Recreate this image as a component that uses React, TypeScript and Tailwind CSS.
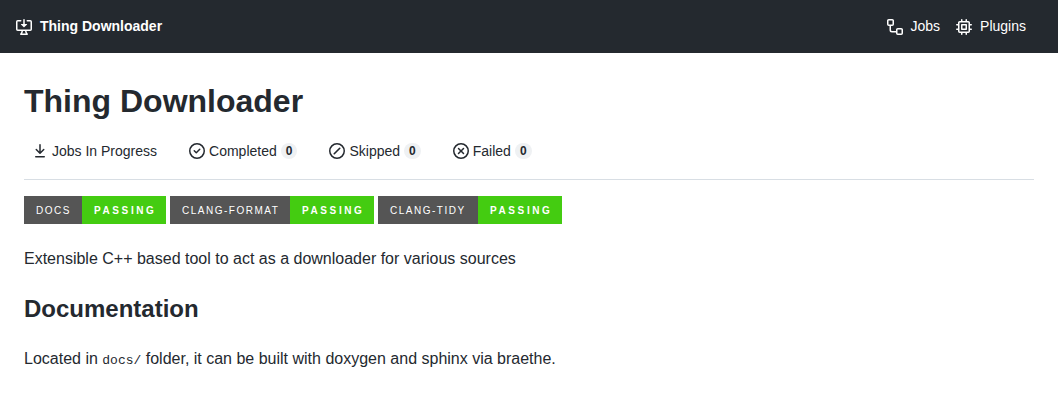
import type { ReactNode } from "react";

const RING = "M0 8a8 8 0 1 1 16 0A8 8 0 0 1 0 8Zm1.5 0a6.5 6.5 0 1 0 13 0 6.5 6.5 0 0 0-13 0Z";

const icons = {
  desktopDownload:
    "m4.927 5.427 2.896 2.896a.25.25 0 0 0 .354 0l2.896-2.896A.25.25 0 0 0 10.896 5H8.75V.75a.75.75 0 1 0-1.5 0V5H5.104a.25.25 0 0 0-.177.427ZM1.573 2.573a.25.25 0 0 0-.073.177v7.5a.25.25 0 0 0 .25.25h12.5a.25.25 0 0 0 .25-.25v-7.5a.25.25 0 0 0-.25-.25h-3a.75.75 0 1 1 0-1.5h3A1.75 1.75 0 0 1 16 2.75v7.5A1.75 1.75 0 0 1 14.25 12h-3.727c.099 1.041.52 1.872 1.292 2.757A.752.752 0 0 1 11.25 16h-6.5a.75.75 0 0 1-.565-1.243c.772-.885 1.192-1.716 1.292-2.757H1.75A1.75 1.75 0 0 1 0 10.25v-7.5A1.75 1.75 0 0 1 1.75 1h3a.75.75 0 0 1 0 1.5h-3a.25.25 0 0 0-.177.073ZM6.982 12a5.72 5.72 0 0 1-.765 2.5h3.566a5.72 5.72 0 0 1-.765-2.5H6.982Z",
  workflow:
    "M0 1.75C0 .784.784 0 1.75 0h3.5C6.216 0 7 .784 7 1.75v3.5A1.75 1.75 0 0 1 5.25 7H4v4a1 1 0 0 0 1 1h4v-1.25C9 9.784 9.784 9 10.75 9h3.5c.966 0 1.75.784 1.75 1.75v3.5A1.75 1.75 0 0 1 14.25 16h-3.5A1.75 1.75 0 0 1 9 14.25v-.75H5A2.5 2.5 0 0 1 2.5 11V7h-.75A1.75 1.75 0 0 1 0 5.25Zm1.75-.25a.25.25 0 0 0-.25.25v3.5c0 .138.112.25.25.25h3.5a.25.25 0 0 0 .25-.25v-3.5a.25.25 0 0 0-.25-.25Zm9 9a.25.25 0 0 0-.25.25v3.5c0 .138.112.25.25.25h3.5a.25.25 0 0 0 .25-.25v-3.5a.25.25 0 0 0-.25-.25Z",
  cpu: "M6.5.75V2h3V.75a.75.75 0 0 1 1.5 0V2h1.25c.966 0 1.75.784 1.75 1.75V5h1.25a.75.75 0 0 1 0 1.5H14v3h1.25a.75.75 0 0 1 0 1.5H14v1.25A1.75 1.75 0 0 1 12.25 14H11v1.25a.75.75 0 0 1-1.5 0V14h-3v1.25a.75.75 0 0 1-1.5 0V14H3.75A1.75 1.75 0 0 1 2 12.25V11H.75a.75.75 0 0 1 0-1.5H2v-3H.75a.75.75 0 0 1 0-1.5H2V3.75C2 2.784 2.784 2 3.75 2H5V.75a.75.75 0 0 1 1.5 0Zm5.75 11.75a.25.25 0 0 0 .25-.25v-8.5a.25.25 0 0 0-.25-.25h-8.5a.25.25 0 0 0-.25.25v8.5c0 .138.112.25.25.25ZM5.75 5h4.5a.75.75 0 0 1 .75.75v4.5a.75.75 0 0 1-.75.75h-4.5a.75.75 0 0 1-.75-.75v-4.5A.75.75 0 0 1 5.75 5Zm.75 4.5h3v-3h-3Z",
  download:
    "M7.47 10.78a.75.75 0 0 0 1.06 0l3.75-3.75a.75.75 0 0 0-1.06-1.06L8.75 8.44V1.75a.75.75 0 0 0-1.5 0v6.69L4.78 5.97a.75.75 0 0 0-1.06 1.06l3.75 3.75ZM3.75 13a.75.75 0 0 0 0 1.5h8.5a.75.75 0 0 0 0-1.5h-8.5Z",
  check:
    RING + "M11.28 6.78a.75.75 0 0 0-1.06-1.06L7.25 8.69 5.78 7.22a.75.75 0 0 0-1.06 1.06l2 2a.75.75 0 0 0 1.06 0l3.5-3.5Z",
  skip: RING + "M11.333 5.833a.825.825 0 0 0-1.166-1.166l-5.5 5.5a.825.825 0 0 0 1.166 1.166l5.5-5.5Z",
  fail:
    RING +
    "M6.03 4.97a.75.75 0 0 0-1.06 1.06L6.94 8 4.97 9.97a.75.75 0 1 0 1.06 1.06L8 9.06l1.97 1.97a.75.75 0 1 0 1.06-1.06L9.06 8l1.97-1.97a.75.75 0 1 0-1.06-1.06L8 6.94 6.03 4.97Z",
};

function Icon({ name }: { name: keyof typeof icons }) {
  return (
    <svg viewBox="0 0 16 16" className="size-4 shrink-0 fill-current" aria-hidden="true">
      <path fillRule="evenodd" d={icons[name]} />
    </svg>
  );
}

function HeaderLink({ icon, children }: { icon: keyof typeof icons; children: ReactNode }) {
  return (
    <a href="#" className="flex items-center gap-2">
      <Icon name={icon} />
      <span>{children}</span>
    </a>
  );
}

function Tab({ icon, label, count }: { icon: keyof typeof icons; label: string; count?: number }) {
  return (
    <a href="#" className="flex items-center gap-1">
      <Icon name={icon} />
      <span>{label}</span>
      {count !== undefined && (
        <span className="rounded-full bg-[#eff1f3] px-[5px] text-xs leading-4 font-bold">{count}</span>
      )}
    </a>
  );
}

function Badge({ label, width }: { label: string; width: string }) {
  return (
    <a href="#" className="flex h-7 text-[10px] leading-[30px] text-white uppercase">
      <span className={`bg-[#555] pl-3 tracking-[0.15em] ${width}`}>{label}</span>
      <span className="w-[84px] bg-[#4c1] pl-3 font-bold tracking-[0.26em]">Passing</span>
    </a>
  );
}

export default function App() {
  return (
    <div className="min-h-screen bg-white font-['Liberation_Sans',Arial,sans-serif] text-[#24292f]">
      <header className="flex items-center justify-between bg-[#24292f] py-4 pr-8 pl-4 text-sm leading-[21px] text-white">
        <div className="font-bold">
          <HeaderLink icon="desktopDownload">Thing Downloader</HeaderLink>
        </div>
        <nav className="flex gap-4">
          <HeaderLink icon="workflow">Jobs</HeaderLink>
          <HeaderLink icon="cpu">Plugins</HeaderLink>
        </nav>
      </header>
      <main className="p-6">
        <h1 className="text-[32px] leading-12 font-bold">Thing Downloader</h1>
        <nav className="flex flex-wrap gap-8 border-b border-[#d8dee4] px-2 pt-4 pb-[18px] text-sm leading-5">
          <Tab icon="download" label="Jobs In Progress" />
          <Tab icon="check" label="Completed" count={0} />
          <Tab icon="skip" label="Skipped" count={0} />
          <Tab icon="fail" label="Failed" count={0} />
        </nav>
        <div className="mt-4 flex flex-wrap gap-1">
          <Badge label="Docs" width="w-[58px]" />
          <Badge label="Clang-Format" width="w-[120px]" />
          <Badge label="Clang-Tidy" width="w-[100px]" />
        </div>
        <p className="mt-[23px] text-base leading-6">Extensible C++ based tool to act as a downloader for various sources</p>
        <h2 className="mt-5 text-2xl leading-9 font-bold">Documentation</h2>
        <p className="mt-5 text-base leading-6">
          Located in <code className="font-['Liberation_Mono',monospace] text-[13px]">docs/</code> folder, it can be built with
          doxygen and sphinx via braethe.
        </p>
      </main>
    </div>
  );
}
